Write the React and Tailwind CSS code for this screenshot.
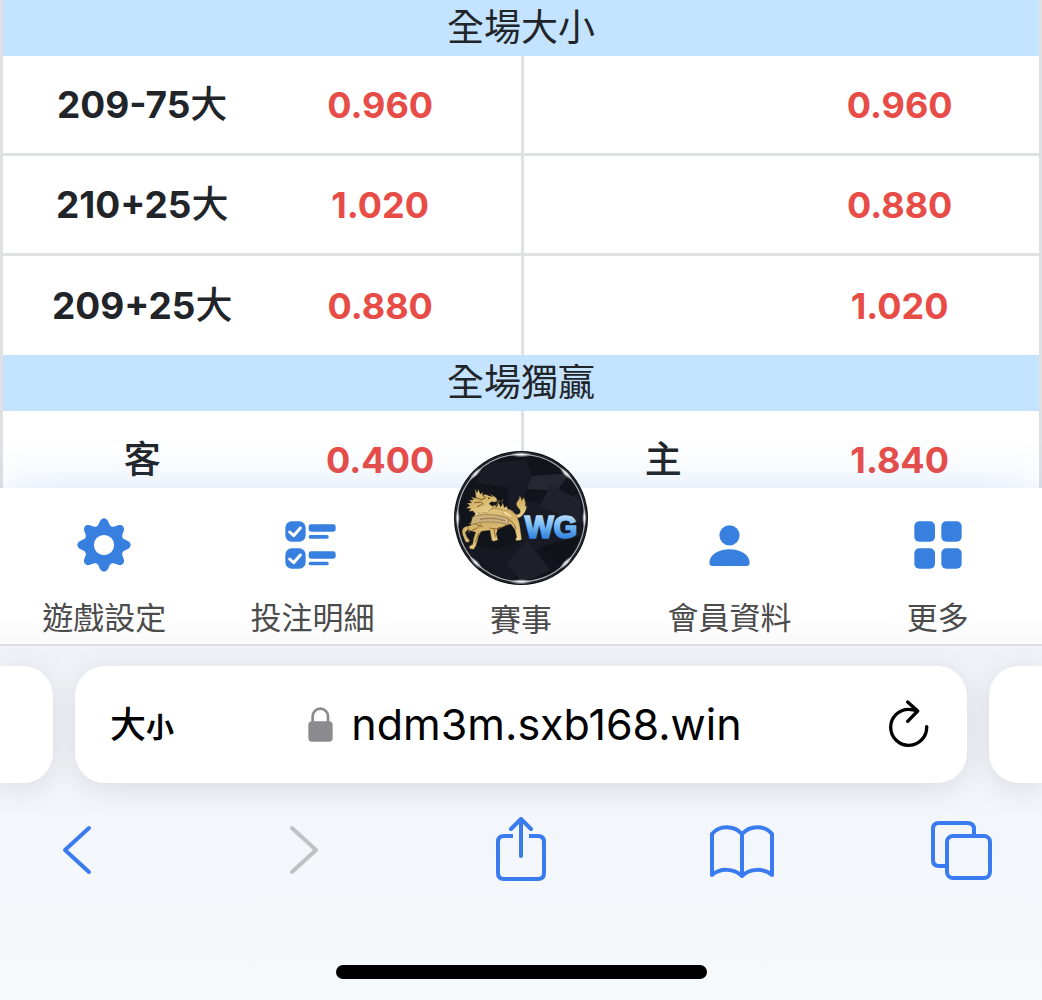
const totals = [
  { line: '209-75', over: '0.960', under: '0.960' },
  { line: '210+25', over: '1.020', under: '0.880' },
  { line: '209+25', over: '0.880', under: '1.020' },
];

const gearPath =
  Array.from({ length: 160 }, (_, i) => {
    const a = (i / 160) * Math.PI * 2;
    const c = Math.cos(8 * a);
    const r = 69 + 10 * Math.sign(c) * Math.abs(c) ** 0.8;
    return `${i ? 'L' : 'M'}${(80 + r * Math.cos(a)).toFixed(1)} ${(80 + r * Math.sin(a)).toFixed(1)}`;
  }).join('') + 'ZM110 80A30 30 0 1 0 50 80A30 30 0 1 0 110 80Z';

function GearIcon() {
  return (
    <svg className="size-[54px]" viewBox="0 0 160 160" fill="currentColor" aria-hidden="true">
      <path d={gearPath} fillRule="evenodd" />
    </svg>
  );
}

function BetListIcon() {
  return (
    <svg className="h-12 w-[55px]" viewBox="0 0 165 144" fill="currentColor" aria-hidden="true">
      <rect x="1" y="1" width="61" height="61" rx="19" />
      <rect x="1" y="82" width="61" height="61" rx="19" />
      <path d="M14 33l12 11 20-23M14 114l12 11 20-23" fill="none" stroke="#fff" strokeWidth="9" strokeLinecap="round" strokeLinejoin="round" />
      <rect x="71" y="10" width="81" height="22" rx="7" />
      <rect x="71" y="42" width="60" height="11" rx="5" />
      <rect x="71" y="91" width="81" height="22" rx="7" />
      <rect x="71" y="122" width="60" height="11" rx="5" />
    </svg>
  );
}

function MemberIcon() {
  return (
    <svg className="size-[41px]" viewBox="0 0 122 122" fill="currentColor" aria-hidden="true">
      <circle cx="61" cy="31" r="30" />
      <path d="M61 72c33 0 60 17 60 40 0 6-4 10-9 10H10c-5 0-9-4-9-10 0-23 27-40 60-40z" />
    </svg>
  );
}

function MoreIcon() {
  return (
    <svg className="size-12" viewBox="0 0 144 144" fill="currentColor" aria-hidden="true">
      <rect x="1" y="1" width="62" height="61" rx="15" />
      <rect x="82" y="1" width="61" height="61" rx="15" />
      <rect x="1" y="82" width="62" height="61" rx="15" />
      <rect x="82" y="82" width="61" height="61" rx="15" />
    </svg>
  );
}

function Qilin() {
  return (
    <g transform="translate(66 120)" strokeLinejoin="round" strokeLinecap="round">
      <g fill="url(#gold)" stroke="#4d3b1c" strokeWidth="1">
        {/* tail */}
        <path d="M132 88c10-2 18 2 24 10 6 7 14 7 18 0 2-5 0-9-4-13-8-8-9-16-2-23 4-4 5-8 4-14 5 3 7 8 6 13 4-2 6-5 7-9 5 10 7 19 4 27l5-2c0 13-6 23-14 30-5 5-10 8-16 6-11-3-17-14-32-15z" />
        {/* body and legs */}
        <path d="M42 84c18-8 44-8 62-2 20-3 40 4 52 18 10 10 15 22 17 35l4 28 2 16-12 3-7-2 4-9-5-22-13-17-24 8-14 4-5 18 5 18-13 4-6-3-5-30c-10 2-18 0-27 4-6 10-9 16-10 26l-6 18-6 9-12-2-1-7 10-6 3-18 6-18-15-5-10-2-6 8 5 14 8 9-3 6-9-1-9-22c-3-10-2-17 6-23l19-5c0-12 4-20 15-34z" />
        {/* head and mane */}
        <path d="M39 26l6 13 4-11 6 14 8-5-2 9c7-4 13-3 19 1l12 3-9-9 15 9c7 4 8 8 6 13l-6 3-10-1-7 6 9 7 9-1-7 9-10 4-6 10-12-3-9 7-5-7-12 3-5-7-13 1 7-8-15-2 12-7-9-7 14-2-7-8 13 0-7-9 14 4z" />
        {/* back ornaments */}
        <path d="M90 84l8-10 5 8 7-14 6 13 7-12 4 14 8-5 2 14-24-5z" />
      </g>
      <path d="M44 54l14 5 12-5M38 68l18-2 8 6M46 80l14-6M62 46l7 5" fill="none" stroke="#7a5b24" strokeWidth="3" />
      <circle cx="81" cy="55" r="2.5" fill="#2a1c0a" />
      <path d="M96 66l16-3M100 78l12-16M118 68l5-10" stroke="#a78545" strokeWidth="2" fill="none" />
      <path d="M22 130l18 2 22 8M32 150c14-4 20-10 24-18M84 144c20 6 38 0 48-10M140 118c10 6 18 16 22 28M96 146l4 24M18 142l4 16M50 160l-10 26" fill="none" stroke="#8d6c31" strokeWidth="3" />
      <path d="M44 98l-8 18M128 98l18 10" fill="none" stroke="#f7e9b7" strokeWidth="4" />
      {/* banner */}
      <path d="M32 110c32-10 72-8 108 6l-2 18c-34-10-70-11-102-3l-10 5z" fill="#cdb27d" stroke="#6c5630" strokeWidth="1.5" />
      <path d="M54 118c26-5 52-3 76 5" fill="none" stroke="#8a7148" strokeWidth="4" strokeLinecap="butt" strokeDasharray="4 1.5" />
    </g>
  );
}

function Logo() {
  return (
    <svg className="size-[134px]" viewBox="42 33 402 402" aria-hidden="true">
      <defs>
        <linearGradient id="wg" x1="0" y1="0.15" x2="0" y2="0.85">
          <stop offset="0" stopColor="#b9dcfb" />
          <stop offset="0.45" stopColor="#72b9f5" />
          <stop offset="1" stopColor="#2f7fdc" />
        </linearGradient>
        <linearGradient id="gold" x1="0" y1="0" x2="0.5" y2="1">
          <stop offset="0" stopColor="#f0dc9c" />
          <stop offset="0.5" stopColor="#d3b268" />
          <stop offset="1" stopColor="#e8cf88" />
        </linearGradient>
        <radialGradient id="glint">
          <stop offset="0" stopColor="#fff" />
          <stop offset="1" stopColor="#fff" stopOpacity="0" />
        </radialGradient>
        <clipPath id="face">
          <circle cx="243" cy="234" r="186" />
        </clipPath>
      </defs>
      <circle cx="243" cy="234" r="201" fill="#080a10" />
      <circle cx="243" cy="234" r="190" fill="#12141c" />
      <g clipPath="url(#face)">
        <path d="M130 70L260 60 275 108 200 140 110 130z" fill="#1a1c26" />
        <path d="M275 108L390 100 350 152 250 146z" fill="#252733" />
        <path d="M200 140L275 108 250 180 340 200 430 150 430 320 250 330 210 230z" fill="#181a24" />
        <path d="M330 135L420 180 420 250 300 200z" fill="#1f212c" />
        <path d="M60 300L170 330 260 300 300 350 200 430 90 400z" fill="#171922" />
        <path d="M260 300L330 390 250 430 200 370z" fill="#1e2029" />
        <path d="M300 320L420 290 380 390z" fill="#101219" />
      </g>
      <circle cx="243" cy="234" r="191" fill="none" stroke="#a5a8ae" strokeWidth="4" />
      <circle cx="243" cy="234" r="197" fill="none" stroke="#2c2e36" strokeWidth="3" />
      <ellipse cx="243" cy="44" rx="34" ry="8" fill="url(#glint)" />
      <ellipse cx="243" cy="425" rx="34" ry="8" fill="url(#glint)" />
      <ellipse cx="53" cy="234" rx="7" ry="28" fill="url(#glint)" />
      <ellipse cx="433" cy="234" rx="7" ry="28" fill="url(#glint)" />
      <ellipse cx="107" cy="101" rx="26" ry="8" transform="rotate(-45 107 101)" fill="url(#glint)" />
      <ellipse cx="378" cy="101" rx="26" ry="8" transform="rotate(45 378 101)" fill="url(#glint)" />
      <ellipse cx="107" cy="368" rx="26" ry="8" transform="rotate(45 107 368)" fill="url(#glint)" />
      <ellipse cx="378" cy="368" rx="26" ry="8" transform="rotate(-45 378 368)" fill="url(#glint)" />
      <Qilin />
      <text x="254" y="294" fill="url(#wg)" stroke="url(#wg)" strokeWidth="5" fontFamily="'Liberation Sans', Arial, sans-serif" fontWeight="700" fontSize="92">
        WG
      </text>
    </svg>
  );
}

function SectionRow({ title }) {
  return (
    <tr className="h-14 bg-[#c4e3fe]">
      <th colSpan={4} scope="colgroup" className="border-x-[3px] border-[#dfe0e4] p-0 font-normal">
        {title}
      </th>
    </tr>
  );
}

function OddsRow({ line, side, leftOdds, rightSide, rightOdds, last }) {
  const edge = last ? 'border-b-0' : 'border-b-[3px]';
  const odds = 'text-[36px] font-bold text-[#e84c47]';
  return (
    <tr className={last ? 'h-[99px]' : 'h-[100px]'}>
      <th scope="row" className={`${edge} border-l-[3px] border-[#dfe0e4] p-0 font-bold`}>
        {line}
        <span className="font-medium">{side}</span>
      </th>
      <td className={`${edge} border-[#dfe0e4] p-0 pr-[42px] text-center`}>
        <button type="button" className={odds}>{leftOdds}</button>
      </td>
      <th scope="row" className={`${edge} border-l-[3px] border-[#dfe0e4] p-0 font-medium`}>{rightSide}</th>
      <td className={`${edge} border-r-[3px] border-[#dfe0e4] p-0 pr-[42px] text-center`}>
        <button type="button" className={odds}>{rightOdds}</button>
      </td>
    </tr>
  );
}

function NavItem({ icon, label }) {
  return (
    <a href="#" className="flex flex-col items-center pt-[29px] pb-2">
      <span className="flex h-14 items-center text-[#3880e0]">{icon}</span>
      <span className="mt-[27px] leading-9">{label}</span>
    </a>
  );
}

function ToolButton({ label, color = 'text-[#3b7bf0]', disabled, children }) {
  return (
    <button type="button" aria-label={label} disabled={disabled} className={`size-16 ${color}`}>
      <svg className="size-16" viewBox="0 0 64 64" fill="none" stroke="currentColor" strokeWidth="4" strokeLinecap="round" strokeLinejoin="round" aria-hidden="true">
        {children}
      </svg>
    </button>
  );
}

export default function App() {
  return (
    <div className="flex h-screen flex-col overflow-hidden bg-white font-[Inter,'Noto_Sans_CJK_TC',sans-serif] text-[#212529]">
      <main className="min-h-0 flex-1 overflow-hidden">
        <table className="w-full table-fixed border-separate border-spacing-0 text-[37px] leading-[54px]">
          <colgroup>
            <col className="w-[27%]" />
            <col className="w-[23%]" />
            <col className="w-[27%]" />
            <col className="w-[23%]" />
          </colgroup>
          <tbody>
            <SectionRow title="全場大小" />
            {totals.map((t, i) => (
              <OddsRow key={t.line} line={t.line} side="大" leftOdds={t.over} rightOdds={t.under} last={i === totals.length - 1} />
            ))}
            <SectionRow title="全場獨贏" />
            <OddsRow side="客" leftOdds="0.400" rightSide="主" rightOdds="1.840" />
          </tbody>
        </table>
      </main>

      <nav className="relative grid grid-cols-5 bg-linear-to-b from-white from-80% to-[#fafafb] text-[31px] text-[#4b4b4b] shadow-[0_0_50px_-4px_rgba(80,145,225,0.28)]">
        <NavItem icon={<GearIcon />} label="遊戲設定" />
        <NavItem icon={<BetListIcon />} label="投注明細" />
        <a href="#" className="-mt-[37px] flex flex-col items-center">
          <Logo />
          <span className="mt-[17px] leading-9">賽事</span>
        </a>
        <NavItem icon={<MemberIcon />} label="會員資料" />
        <NavItem icon={<MoreIcon />} label="更多" />
      </nav>

      <footer className="relative overflow-hidden border-t-2 border-[#dcdee1] bg-linear-to-b from-[#eff3f8] to-[#f6f9fc] pt-5 pb-[21px]">
        <div className="flex h-[117px] gap-[22px]">
          <div className="w-[53px] rounded-r-[30px] bg-white shadow-[0_6px_30px_rgba(0,0,0,0.1)]" />
          <div className="grid flex-1 grid-cols-[1fr_auto_1fr] items-center rounded-[30px] bg-white pr-[37px] pl-[35px] text-black shadow-[0_6px_30px_rgba(0,0,0,0.1)]">
            <button type="button" aria-label="頁面設定" className="flex items-baseline justify-self-start">
              <span className="text-[36px] font-medium">大</span>
              <span className="text-[28px] font-bold">小</span>
            </button>
            <label className="ml-2.5 flex items-center gap-[18px]">
              <svg className="h-[35px] w-[25px]" viewBox="0 0 75 105" aria-label="安全連線">
                <rect x="1" y="43" width="73" height="61" rx="11" fill="#8b8a8f" />
                <path d="M14 46V28a23 23 0 0 1 46 0v18" fill="none" stroke="#8b8a8f" strokeWidth="8" />
              </svg>
              <input type="text" aria-label="網址" defaultValue="ndm3m.sxb168.win" className="field-sizing-content bg-transparent text-[43px] outline-none" />
            </label>
            <button type="button" aria-label="重新載入" className="justify-self-end">
              <svg className="h-[50px] w-[42px]" viewBox="0 0 126 150" fill="none" stroke="currentColor" strokeWidth="10" strokeLinecap="round" strokeLinejoin="round" aria-hidden="true">
                <path d="M116 80a54 54 0 1 1-54-52q13 0 27 5M59 6l30 27-30 31" />
              </svg>
            </button>
          </div>
          <div className="w-[53px] rounded-l-[30px] bg-white shadow-[0_6px_30px_rgba(0,0,0,0.1)]" />
        </div>

        <div className="mt-[34px] flex justify-between px-12">
          <ToolButton label="上一頁">
            <path d="M41 11L17 33l24 22" />
          </ToolButton>
          <ToolButton label="下一頁" color="text-[#c0c1c4]" disabled>
            <path d="M23 11l24 22-24 22" />
          </ToolButton>
          <ToolButton label="分享">
            <path d="M24 19h-9q-6 0-6 6v31q0 6 6 6h34q6 0 6-6V25q0-6-6-6h-9" strokeLinecap="butt" />
            <path d="M32 39V2M22 12L32 2l10 10" />
          </ToolButton>
          <ToolButton label="書籤">
            <path d="M32 17C24 8 9 8 2 17v41c8-7 22-7 30 1 8-8 22-8 30-1V17c-7-9-22-9-30 0zM32 17v42" />
          </ToolButton>
          <ToolButton label="分頁">
            <path d="M15 49h-6q-6 0-6-6V12q0-6 6-6h28q7 0 7 6v6" />
            <rect x="17" y="19" width="43" height="42" rx="6" />
          </ToolButton>
        </div>

        <div className="mx-auto mt-[84px] h-3.5 w-[371px] rounded-full bg-black" />
      </footer>
    </div>
  );
}
